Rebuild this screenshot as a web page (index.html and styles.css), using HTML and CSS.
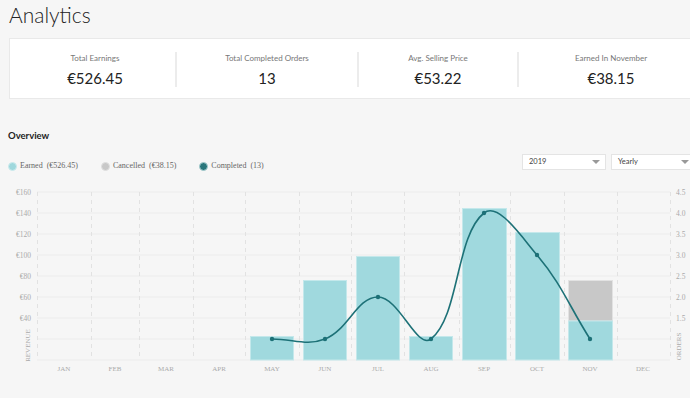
FILE: index.html
```html
<!DOCTYPE html>
<html lang="en">
<head>
    <meta charset="UTF-8">
    <meta name="viewport" content="width=device-width, initial-scale=1.0">
    <title>Analytics</title>
    <link rel="stylesheet" href="styles.css">
</head>
<body>
    <div id="page">
        <h1 class="page-title">Analytics</h1>

        <div class="stats-card">
            <div class="stat stat-first">
                <div class="stat-label">Total Earnings</div>
                <div class="stat-value">€526.45</div>
            </div>
            <div class="stat">
                <div class="stat-label">Total Completed Orders</div>
                <div class="stat-value">13</div>
            </div>
            <div class="stat">
                <div class="stat-label">Avg. Selling Price</div>
                <div class="stat-value">€53.22</div>
            </div>
            <div class="stat">
                <div class="stat-label">Earned In November</div>
                <div class="stat-value">€38.15</div>
            </div>
        </div>

        <h2 class="section-title">Overview</h2>

        <div class="chart-bar">
            <div class="legend">
                <div class="legend-item"><span class="dot dot-earned"></span>Earned&nbsp; (€526.45)</div>
                <div class="legend-item"><span class="dot dot-cancelled"></span>Cancelled&nbsp; (€38.15)</div>
                <div class="legend-item"><span class="dot dot-completed"></span>Completed&nbsp; (13)</div>
            </div>
            <div class="filters">
                <div class="select">2019<span class="caret"></span></div>
                <div class="select">Yearly<span class="caret"></span></div>
            </div>
        </div>

        <svg class="chart" width="690" height="200" viewBox="0 180 690 200">
            <!-- horizontal grid -->
            <g class="grid-h">
                <line x1="37" y1="191" x2="670" y2="191"/>
                <line x1="37" y1="212" x2="670" y2="212"/>
                <line x1="37" y1="233" x2="670" y2="233"/>
                <line x1="37" y1="254" x2="670" y2="254"/>
                <line x1="37" y1="275" x2="670" y2="275"/>
                <line x1="37" y1="296" x2="670" y2="296"/>
                <line x1="37" y1="317" x2="670" y2="317"/>
                <line x1="37" y1="338" x2="670" y2="338"/>
                <line x1="37" y1="359" x2="670" y2="359"/>
            </g>
            <!-- vertical grid -->
            <g class="grid-v">
                <line x1="37.5" y1="191" x2="37.5" y2="359"/>
                <line x1="91.5" y1="191" x2="91.5" y2="359"/>
                <line x1="139.5" y1="191" x2="139.5" y2="359"/>
                <line x1="193.5" y1="191" x2="193.5" y2="359"/>
                <line x1="245.5" y1="191" x2="245.5" y2="359"/>
                <line x1="299.5" y1="191" x2="299.5" y2="359"/>
                <line x1="351.5" y1="191" x2="351.5" y2="359"/>
                <line x1="404.5" y1="191" x2="404.5" y2="359"/>
                <line x1="459.5" y1="191" x2="459.5" y2="359"/>
                <line x1="510.5" y1="191" x2="510.5" y2="359"/>
                <line x1="564.5" y1="191" x2="564.5" y2="359"/>
                <line x1="617.5" y1="191" x2="617.5" y2="359"/>
                <line x1="670.5" y1="191" x2="670.5" y2="359"/>
            </g>

            <!-- revenue bars -->
            <g class="bars">
                <rect class="bar-earned" x="250.5" y="335.5" width="43" height="23.5"/>
                <rect class="bar-earned" x="303.5" y="279.5" width="43" height="79.5"/>
                <rect class="bar-earned" x="356.5" y="255.5" width="43" height="103.5"/>
                <rect class="bar-earned" x="409.5" y="335.5" width="43" height="23.5"/>
                <rect class="bar-earned" x="462.5" y="207.5" width="44" height="151.5"/>
                <rect class="bar-earned" x="515.5" y="231.5" width="44" height="127.5"/>
                <rect class="bar-cancelled" x="568.5" y="279.5" width="44" height="40.5"/>
                <rect class="bar-earned" x="568.5" y="320" width="44" height="39"/>
            </g>

            <!-- orders line -->
            <path class="orders-line" d="M272,338 C293.2,338 306.3,345.4 325,338 C348.7,328.6 356.8,296 378,296 C399.2,296 417,349.1 431,338 C459.4,315.5 455.6,234.5 484,212 C498,200.9 519.8,233.6 537,254 C562.2,284 568.8,304.4 590,338"/>
            <g class="orders-points">
                <circle cx="272" cy="338" r="2.2"/>
                <circle cx="325" cy="338" r="2.2"/>
                <circle cx="378" cy="296" r="2.2"/>
                <circle cx="431" cy="338" r="2.2"/>
                <circle cx="484" cy="212" r="2.2"/>
                <circle cx="537" cy="254" r="2.2"/>
                <circle cx="590" cy="338" r="2.2"/>
            </g>

            <!-- left axis -->
            <g class="tick tick-left">
                <text x="31" y="194">€160</text>
                <text x="31" y="215">€140</text>
                <text x="31" y="236">€120</text>
                <text x="31" y="257">€100</text>
                <text x="31" y="278">€80</text>
                <text x="31" y="299">€60</text>
                <text x="31" y="320">€40</text>
            </g>
            <text class="axis-title" transform="translate(29.5 344.5) rotate(-90)">REVENUE</text>

            <!-- right axis -->
            <g class="tick tick-right">
                <text x="676" y="194">4.5</text>
                <text x="676" y="215">4.0</text>
                <text x="676" y="236">3.5</text>
                <text x="676" y="257">3.0</text>
                <text x="676" y="278">2.5</text>
                <text x="676" y="299">2.0</text>
                <text x="676" y="320">1.5</text>
            </g>
            <text class="axis-title" transform="translate(681 345.5) rotate(-90)">ORDERS</text>

            <!-- months -->
            <g class="tick tick-month">
                <text x="64" y="370">JAN</text>
                <text x="115" y="370">FEB</text>
                <text x="166" y="370">MAR</text>
                <text x="219" y="370">APR</text>
                <text x="272" y="370">MAY</text>
                <text x="325" y="370">JUN</text>
                <text x="378" y="370">JUL</text>
                <text x="431" y="370">AUG</text>
                <text x="484" y="370">SEP</text>
                <text x="537" y="370">OCT</text>
                <text x="590" y="370">NOV</text>
                <text x="643" y="370">DEC</text>
            </g>
        </svg>
    </div>
</body>
</html>
```

FILE: styles.css
```css
html, body {
    margin: 0;
    padding: 0;
    background-color: #f6f6f6;
    overflow: hidden;
}
#page {
    width: 690px;
    height: 398px;
    font-family: Lato, "Open Sans", sans-serif;
    color: #222;
}
.page-title {
    margin: 0;
    padding: 1px 0 0 9px;
    font-size: 21px;
    font-weight: 300;
    line-height: 28px;
    color: #222;
}
.stats-card {
    display: grid;
    grid-template-columns: 165px 182px 160px 186px;
    width: 693px;
    margin: 9px 0 0 9px;
    padding: 13px 0 11px 0;
    background-color: #fff;
    border: 1px solid #e9e9e9;
    box-sizing: border-box;
    height: 61px;
}
.stat {
    border-left: 2px solid #ececec;
    text-align: center;
    height: 35px;
}
.stat-first {
    border-left: none;
    padding-left: 5px;
}
.stat-label {
    font-size: 8px;
    line-height: 12px;
    color: #777;
}
.stat-value {
    margin-top: 5px;
    font-size: 15px;
    line-height: 18px;
    color: #222;
}
.section-title {
    margin: 31px 0 0 8px;
    font-size: 9.5px;
    font-weight: 700;
    line-height: 12px;
    color: #222;
}
.chart-bar {
    display: flex;
    justify-content: space-between;
    align-items: flex-start;
    height: 27px;
    margin-top: 12px;
}
.legend {
    display: flex;
    gap: 23px;
    padding: 6px 0 0 8px;
    font-family: "Liberation Serif", serif;
    font-size: 8px;
    color: #666;
}
.legend-item {
    display: flex;
    align-items: center;
    line-height: 12px;
}
.dot {
    width: 7px;
    height: 7px;
    border-radius: 50%;
    margin-right: 3px;
    border: 1px solid #e3e3e3;
}
.dot-earned {
    background-color: #9fd8dd;
    border-color: #cdebee;
}
.dot-cancelled {
    background-color: #c8c8c8;
    border-color: #e0e0e0;
}
.dot-completed {
    background-color: #2a767b;
    border-color: #a9cfd1;
}
.filters {
    display: flex;
    gap: 5px;
    margin-right: -5px;
}
.select {
    position: relative;
    width: 84px;
    height: 16px;
    box-sizing: border-box;
    padding-left: 6px;
    background-color: #fff;
    border: 1px solid #e4e4e4;
    font-size: 7.5px;
    line-height: 14px;
    color: #444;
}
.caret {
    position: absolute;
    right: 5px;
    top: 5px;
    width: 0;
    height: 0;
    border-left: 4px solid transparent;
    border-right: 4px solid transparent;
    border-top: 4px solid #999;
}
.chart {
    display: block;
}
.grid-h line {
    stroke: #ececec;
    stroke-width: 1;
}
.grid-v line {
    stroke: #e2e2e2;
    stroke-width: 1;
    stroke-dasharray: 4 4;
}
.bar-earned {
    fill: #a0d9de;
    stroke: #c4e8eb;
    stroke-width: 1;
}
.bar-cancelled {
    fill: #c8c8c8;
    stroke: #e2e2e2;
    stroke-width: 1;
}
.orders-line {
    fill: none;
    stroke: #1d7177;
    stroke-width: 1.6;
}
.orders-points circle {
    fill: #1d7177;
}
.tick text, .axis-title {
    font-family: "Liberation Serif", serif;
    font-size: 7.5px;
    fill: #aaa;
}
.tick-left text {
    text-anchor: end;
}
.tick-month text {
    text-anchor: middle;
    font-size: 7px;
}
.axis-title {
    text-anchor: middle;
    font-size: 7px;
}
```
